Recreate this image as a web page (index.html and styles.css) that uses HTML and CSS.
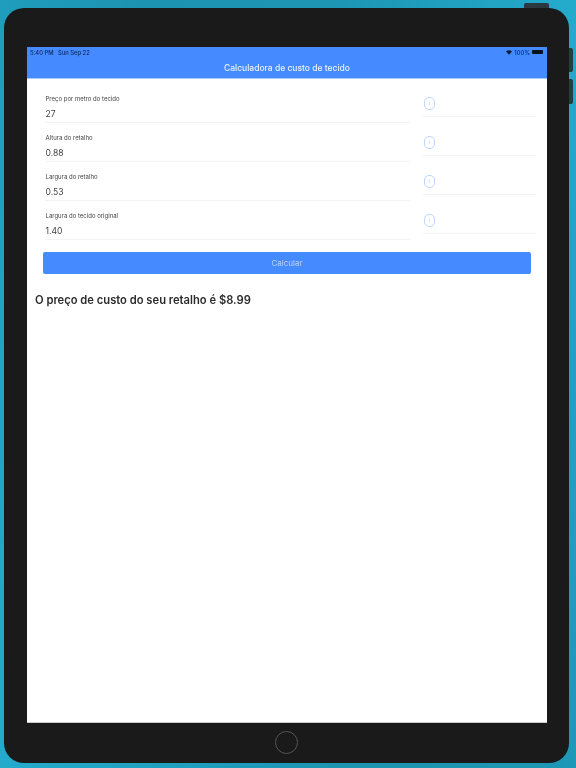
FILE: index.html
```html
<!DOCTYPE html>
<html lang="en">
<head>
    <meta charset="UTF-8">
    <meta name="viewport" content="width=device-width, initial-scale=1.0">
    <title>Calculadora de custo de tecido</title>
    <link rel="stylesheet" href="styles.css">
</head>
<body>
    <div class="device">
        <div class="btn-top"></div>
        <div class="btn-side btn-up"></div>
        <div class="btn-side btn-down"></div>

        <div class="screen">
            <div class="header">
                <div class="status-bar">
                    <span>5:40 PM &nbsp; Sun Sep 22</span>
                    <div class="status-right">
                        <svg class="wifi" viewBox="0 0 12 9"><path d="M6 9 0 2.6C3.4-.8 8.6-.8 12 2.6z"/></svg>
                        <span>100%</span>
                        <div class="battery"></div>
                    </div>
                </div>
                <div class="title">Calculadora de custo de tecido</div>
            </div>

            <div class="form">
                <div class="fields">
                    <div class="field">
                        <div class="label">Preço por metro do tecido</div>
                        <div class="value">27</div>
                    </div>
                    <div class="field">
                        <div class="label">Altura do retalho</div>
                        <div class="value">0.88</div>
                    </div>
                    <div class="field">
                        <div class="label">Largura do retalho</div>
                        <div class="value">0.53</div>
                    </div>
                    <div class="field">
                        <div class="label">Largura do tecido original</div>
                        <div class="value">1.40</div>
                    </div>
                </div>
                <div class="hints">
                    <div class="hint"><div class="info">i</div></div>
                    <div class="hint"><div class="info">i</div></div>
                    <div class="hint"><div class="info">i</div></div>
                    <div class="hint"><div class="info">i</div></div>
                </div>
            </div>

            <button class="calc-btn">Calcular</button>
            <div class="result">O preço de custo do seu retalho é $8.99</div>
        </div>

        <div class="home-btn"></div>
    </div>
</body>
</html>
```

FILE: styles.css
```css
* {
    box-sizing: border-box;
}
html, body {
    height: 100%;
}
body {
    margin: 0;
    padding: 8px 7px 5px 4px;
    overflow: hidden;
    font-family: Inter, "Liberation Sans", sans-serif;
    background: linear-gradient(75deg, #24abcc 0%, #1c93b0 45%, #1d96b4 70%, #24abcc 100%);
}
.device {
    position: relative;
    width: 565px;
    height: 755px;
    padding: 39px 22px 40px 23px;
    background-color: #1a1a1a;
    border-radius: 20px;
}
.btn-top {
    position: absolute;
    top: -5px;
    left: 520px;
    width: 25px;
    height: 5px;
    background-color: #2a3a40;
    border-radius: 2px 2px 0 0;
}
.btn-side {
    position: absolute;
    left: 565px;
    width: 4px;
    background-color: #1f3f49;
    border-radius: 0 2px 2px 0;
}
.btn-up {
    top: 40px;
    height: 24px;
}
.btn-down {
    top: 71px;
    height: 25px;
}
.screen {
    height: 676px;
    background-color: #fff;
    border-bottom: 1px solid #ccc;
}
.header {
    height: 32px;
    background-color: #468aff;
    border-bottom: 1px solid #a9c8ff;
    filter: blur(0.5px);
}
.status-bar {
    display: flex;
    justify-content: space-between;
    align-items: center;
    height: 10px;
    padding: 0 4px 0 3px;
    font-size: 5.8px;
    font-weight: 500;
    color: #0f2a60;
}
.status-right {
    display: flex;
    align-items: center;
    gap: 2px;
}
.wifi {
    width: 6px;
    height: 5px;
    fill: #0f1f40;
}
.battery {
    width: 11px;
    height: 4px;
    background-color: #0a1020;
    border-radius: 1px;
}
.title {
    height: 21px;
    padding-top: 1px;
    font-size: 8.5px;
    font-weight: 500;
    line-height: 21px;
    text-align: center;
    color: #eaf2ff;
}
.form {
    display: flex;
    gap: 13px;
    padding: 5px 11px 0 18px;
    filter: blur(0.6px);
}
.fields {
    width: 365px;
}
.field {
    height: 39px;
    padding: 11px 0 0 0.5px;
    border-bottom: 1px solid #f3f3f3;
}
.label {
    font-size: 6px;
    line-height: 8px;
    color: #444;
}
.value {
    margin-top: 5px;
    font-size: 8.6px;
    line-height: 12px;
    color: #444;
}
.hints {
    width: 113px;
}
.hint {
    height: 39px;
    padding-top: 19px;
    border-bottom: 1px solid #f3f3f3;
}
.hint:first-child {
    height: 33px;
    padding-top: 13px;
}
.info {
    width: 11px;
    height: 13px;
    margin-left: 1px;
    border: 1.5px solid #bcd6ff;
    border-radius: 5px;
    font-size: 5px;
    line-height: 10px;
    text-align: center;
    color: #a9c8ff;
}
.calc-btn {
    display: block;
    width: 488px;
    height: 22px;
    margin: 12px 0 0 16px;
    padding: 0;
    border: none;
    border-radius: 2px;
    background-color: #468aff;
    font-family: Inter, "Liberation Sans", sans-serif;
    font-size: 8px;
    color: #b9d3ff;
    filter: blur(0.4px);
}
.result {
    margin: 19px 0 0 8px;
    font-size: 11.2px;
    font-weight: 600;
    line-height: 14px;
    color: #2b2b2b;
    filter: blur(0.5px);
}
.home-btn {
    position: absolute;
    left: 271px;
    top: 723px;
    width: 23px;
    height: 23px;
    border: 1px solid #555;
    border-radius: 50%;
}
```
